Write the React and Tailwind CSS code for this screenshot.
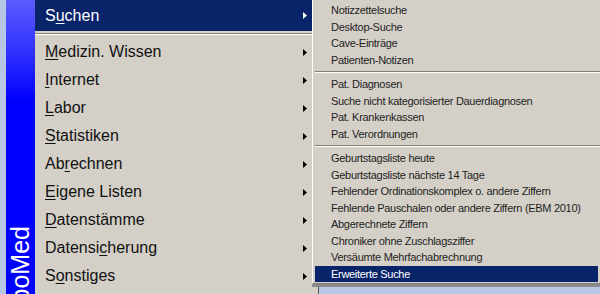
const mainItems = [
  { pre: "", u: "M", post: "edizin. Wissen" },
  { pre: "", u: "I", post: "nternet" },
  { pre: "", u: "L", post: "abor" },
  { pre: "", u: "S", post: "tatistiken" },
  { pre: "Ab", u: "r", post: "echnen" },
  { pre: "", u: "E", post: "igene Listen" },
  { pre: "", u: "D", post: "atenstämme" },
  { pre: "Datensi", u: "c", post: "herung" },
  { pre: "S", u: "o", post: "nstiges" },
];

const groups = [
  ["Notizzettelsuche", "Desktop-Suche", "Cave-Einträge", "Patienten-Notizen"],
  ["Pat. Diagnosen", "Suche nicht kategorisierter Dauerdiagnosen", "Pat. Krankenkassen", "Pat. Verordnungen"],
  [
    "Geburtstagsliste heute",
    "Geburtstagsliste nächste 14 Tage",
    "Fehlender Ordinationskomplex o. andere Ziffern",
    "Fehlende Pauschalen oder andere Ziffern (EBM 2010)",
    "Abgerechnete Ziffern",
    "Chroniker ohne Zuschlagsziffer",
    "Versäumte Mehrfachabrechnung",
    "Erweiterte Suche",
  ],
];

function Arrow({ white }) {
  return (
    <svg width="4" height="7" viewBox="0 0 4 7" className="shrink-0">
      <path d="M0 0 L4 3.5 L0 7 Z" fill={white ? "#ffffff" : "#000000"} />
    </svg>
  );
}

function Sep({ h, top }) {
  return (
    <div className={`flex flex-col ${h}`}>
      <div className={top} />
      <div className="h-px bg-[#808080]" />
      <div className="h-px bg-white" />
    </div>
  );
}

export default function App() {
  return (
    <div className="w-[600px] h-[294px] overflow-hidden flex bg-[#d4d0c8] font-['Liberation_Sans',Arial,sans-serif]">
      <div className="w-[6px] shrink-0 bg-[#b7c6e4]" />
      <div className="w-[29px] shrink-0 overflow-hidden flex flex-col items-center pt-[226px] bg-[linear-gradient(to_bottom,#5b5bff_0px,#2a2aff_60px,#0000ff_100px,#0000ff_100%)]">
        <div className="[writing-mode:vertical-rl] rotate-180 text-white text-[25px] leading-none shrink-0 whitespace-nowrap">
          TurboMed
        </div>
      </div>
      <div className="w-[277px] shrink-0 flex flex-col">
        <div className="h-[31px] shrink-0 bg-[#0a246a] text-white flex items-center pl-[10px] pr-[5px] text-[16px]">
          <span className="flex-1">
            S<span className="underline underline-offset-2">u</span>chen
          </span>
          <Arrow white />
        </div>
        <Sep h="h-[7px]" top="h-[2px]" />
        {mainItems.map((it, i) => (
          <div key={i} className="h-[28px] shrink-0 flex items-center pl-[10px] pr-[5px] text-[16px] text-[#111]">
            <span className="flex-1">
              {it.pre}
              <span className="underline underline-offset-2">{it.u}</span>
              {it.post}
            </span>
            <Arrow />
          </div>
        ))}
      </div>
      <div className="flex-1 flex flex-col">
        <div className="h-[284px] shrink-0 flex flex-col border-l border-l-white pl-[2px] pt-[2px] border-b border-b-[#808080]">
          {groups.map((g, gi) => (
            <div key={gi} className="flex flex-col">
              {gi > 0 && <Sep h="h-[8px]" top="h-[3px]" />}
              {g.map((t) => {
                const hi = t === "Erweiterte Suche";
                return (
                  <div
                    key={t}
                    className={`h-[16.5px] shrink-0 flex items-center pl-[16px] text-[11px] tracking-[-0.3px] mr-[2px] ${
                      hi ? "bg-[#0a246a] text-white" : "text-[#1e1e1e]"
                    }`}
                  >
                    {t}
                  </div>
                );
              })}
            </div>
          ))}
        </div>
        <div className="h-[3px] bg-[#8a8a8a]" />
        <div className="flex-1 flex">
          <div className="w-[6px] bg-[#d4d0c8]" />
          <div className="w-px bg-[#555]" />
          <div className="flex-1 bg-[#b9c7e6]" />
        </div>
      </div>
    </div>
  );
}
